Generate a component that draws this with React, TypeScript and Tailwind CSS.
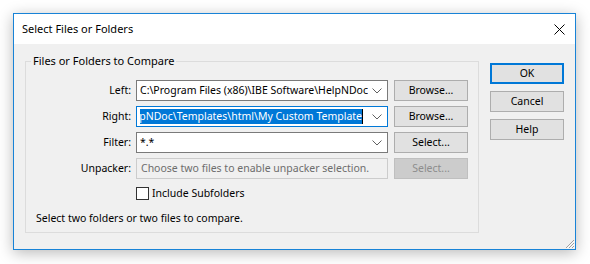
import React from 'react';

const font = { fontFamily: '"Noto Sans", "Liberation Sans", sans-serif' };

const Chevron: React.FC = () => (
  <svg width="10" height="6" viewBox="0 0 10 6" className="shrink-0">
    <path d="M0.5 0.5 L5 5 L9.5 0.5" fill="none" stroke="#606060" strokeWidth="1" />
  </svg>
);

const Combo: React.FC<{ value: string; focused?: boolean }> = ({ value, focused }) => (
  <div
    className={`flex items-center h-[21px] w-[252px] bg-white border ${
      focused ? 'border-[#0078d7]' : 'border-[#7a7a7a]'
    } pl-[3px] pr-[5px]`}
  >
    <div className={`flex-1 min-w-0 overflow-hidden flex ${focused ? 'justify-end' : ''} whitespace-nowrap`}>
      {focused ? (
        <span className="flex items-center shrink-0">
          <span className="bg-[#0078d7] text-white leading-[15px]">{value}</span>
          <span className="w-px h-[15px] bg-black" />
        </span>
      ) : (
        <span className="leading-[15px]">{value}</span>
      )}
    </div>
    <div className={focused ? 'pl-[9px]' : 'pl-[4px]'}>
      <Chevron />
    </div>
  </div>
);

const Btn: React.FC<{ label: string; disabled?: boolean; primary?: boolean }> = ({ label, disabled, primary }) => (
  <button
    type="button"
    className={`h-[21px] w-[74px] flex items-center justify-center leading-none ${
      disabled
        ? 'bg-[#cccccc] border border-[#bfbfbf] text-[#8d8d8d]'
        : primary
        ? 'bg-[#e1e1e1] border-2 border-[#0078d7] text-black'
        : 'bg-[#e1e1e1] border border-[#adadad] text-black'
    }`}
  >
    {label}
  </button>
);

const Row: React.FC<{ label: string; children: React.ReactNode }> = ({ label, children }) => (
  <div className="flex items-center h-[21px]">
    <div className="w-[105px] text-right">{label}</div>
    <div className="ml-[5px] flex items-center gap-[6px]">{children}</div>
  </div>
);

export default function App() {
  return (
    <div className="w-[590px] h-[264px] bg-white p-[13px] text-[10.5px] text-black" style={font}>
      <div className="relative w-[563px] h-[237px] border border-[#1883d7] bg-[#f0f0f0] shadow-[0_3px_14px_rgba(0,0,0,0.28)] flex flex-col">
        <div className="h-[30px] bg-white flex items-center justify-between pl-[8px] pr-[10px] shrink-0">
          <span className="text-[11px]">Select Files or Folders</span>
          <svg width="11" height="11" viewBox="0 0 11 11">
            <path d="M0.5 0.5 L10.5 10.5 M10.5 0.5 L0.5 10.5" stroke="#000" strokeWidth="1" />
          </svg>
        </div>
        <div className="flex pl-[11px] pt-[9px]">
          <fieldset className="w-[454px] h-[180px] border border-[#dcdcdc] rounded-none">
            <legend className="ml-[5px] px-[2px] leading-[16px] text-[11px]">Files or Folders to Compare</legend>
            <div className="flex flex-col gap-[5px] pt-[11px]">
              <Row label="Left:">
                <Combo value="C:\Program Files (x86)\IBE Software\HelpNDoc" />
                <Btn label="Browse..." />
              </Row>
              <Row label="Right:">
                <Combo value="HelpNDoc\Templates\html\My Custom Template" focused />
                <Btn label="Browse..." />
              </Row>
              <Row label="Filter:">
                <Combo value="*.*" />
                <Btn label="Select..." />
              </Row>
              <Row label="Unpacker:">
                <div className="flex items-center h-[21px] w-[252px] bg-[#f0f0f0] border border-[#cccccc] pl-[4px] text-[#6d6d6d] whitespace-nowrap overflow-hidden">
                  Choose two files to enable unpacker selection.
                </div>
                <Btn label="Select..." disabled />
              </Row>
            </div>
            <div className="flex items-center mt-[7px] ml-[110px] gap-[3px]">
              <div className="w-[13px] h-[13px] border border-[#333333] bg-white" />
              <span>Include Subfolders</span>
            </div>
            <div className="mt-[9px] ml-[10px]">Select two folders or two files to compare.</div>
          </fieldset>
          <div className="flex flex-col gap-[7px] ml-[11px] pt-[10px]">
            <Btn label="OK" primary />
            <Btn label="Cancel" />
            <Btn label="Help" />
          </div>
        </div>
        <svg width="12" height="12" viewBox="0 0 12 12" className="absolute right-0 bottom-0">
          <path d="M11 3 L3 11 M11 6 L6 11 M11 9 L9 11" stroke="#a0a0a0" strokeWidth="1" />
          <path d="M11.5 4 L4 11.5 M11.5 7 L7 11.5 M11.5 10 L10 11.5" stroke="#ffffff" strokeWidth="1" />
        </svg>
      </div>
    </div>
  );
}
